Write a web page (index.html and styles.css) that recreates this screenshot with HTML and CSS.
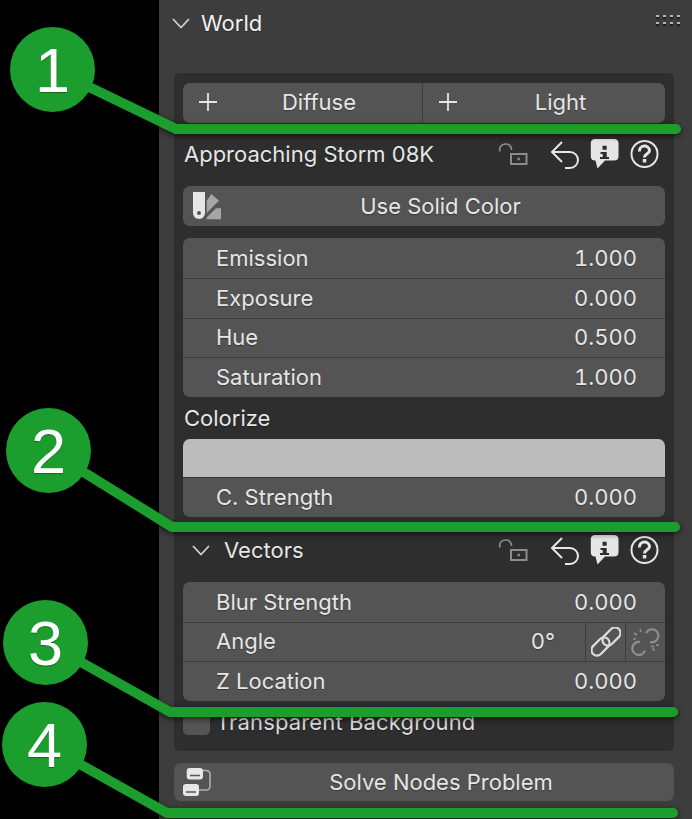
FILE: index.html
```html
<!DOCTYPE html>
<html>

<head>
    <meta charset="utf-8">
    <title>World</title>
    <link rel="stylesheet" href="styles.css">
</head>

<body>
    <svg class="defs" width="0" height="0">
        <symbol id="icon-lock" viewBox="0 0 30 24">
            <path d="M2 9.500A5.600 5.600 0 0 1 7.500 2A5.600 5.600 0 0 1 13.500 8" fill="none" stroke="#8c8c8c" stroke-width="1.700" />
            <rect x="13" y="12" width="15.500" height="10" fill="none" stroke="#8c8c8c" stroke-width="2" />
            <rect x="19.500" y="15.700" width="2.400" height="2.600" fill="#8c8c8c" />
        </symbol>
        <symbol id="icon-undo" viewBox="0 0 32 29">
            <path d="M12 2L2 12L12 22M2 12H20A8 8 0 0 1 20 28H15" fill="none" stroke="#e6e6e6" stroke-width="2" />
        </symbol>
        <symbol id="icon-info" viewBox="0 0 30 32">
            <path d="M5 1H24Q28.500 1 28.500 5.500V18Q28.500 22.500 24 22.500H15L7.500 30.500L5.500 22.500H5Q.8 22.500 .8 18V5.500Q.8 1 5 1Z" fill="#e6e6e6" />
            <path d="M12.500 7.800H16.700V11.800H12.500ZM10.500 14H16.700V19H19V21H10V19H12.700V16H10.500Z" fill="#2e2e2e" />
        </symbol>
        <symbol id="icon-help" viewBox="0 0 30 30">
            <circle cx="14.500" cy="15" r="13" fill="none" stroke="#e6e6e6" stroke-width="2" />
            <path d="M9.500 12.500A5 5 0 0 1 19.500 11.500C19.500 15 14.500 14.500 14.500 18.500" fill="none" stroke="#e6e6e6" stroke-width="3" />
            <rect x="12.800" y="20" width="3.500" height="3.500" fill="#e6e6e6" />
        </symbol>
    </svg>

    <main class="panel">
        <header class="panel-head">
            <svg class="chevron" width="18" height="11" viewBox="0 0 18 11">
                <path d="M1 1L9 9.500L17 1" fill="none" stroke="#d0d0d0" stroke-width="1.800" />
            </svg>
            <span class="panel-title">World</span>
            <svg class="grip" width="26" height="12" viewBox="0 0 26 12">
                <g fill="#1f1f1f">
                    <rect x="1" y="2" width="3" height="2" /><rect x="8" y="2" width="3" height="2" /><rect x="15" y="2" width="3" height="2" /><rect x="22" y="2" width="3" height="2" />
                    <rect x="1" y="9" width="3" height="2" /><rect x="8" y="9" width="3" height="2" /><rect x="15" y="9" width="3" height="2" /><rect x="22" y="9" width="3" height="2" />
                </g>
                <g fill="#b4b4b4">
                    <rect x="1" y="0" width="3" height="2" /><rect x="8" y="0" width="3" height="2" /><rect x="15" y="0" width="3" height="2" /><rect x="22" y="0" width="3" height="2" />
                    <rect x="1" y="7" width="3" height="2" /><rect x="8" y="7" width="3" height="2" /><rect x="15" y="7" width="3" height="2" /><rect x="22" y="7" width="3" height="2" />
                </g>
            </svg>
        </header>

        <section class="box">
            <div class="split">
                <button class="btn btn-plus">
                    <svg class="plus" width="18" height="18" viewBox="0 0 18 18"><path d="M9 0V18M0 9H18" stroke="#e6e6e6" stroke-width="1.800" /></svg>
                    Diffuse
                </button>
                <button class="btn btn-plus">
                    <svg class="plus" width="18" height="18" viewBox="0 0 18 18"><path d="M9 0V18M0 9H18" stroke="#e6e6e6" stroke-width="1.800" /></svg>
                    Light
                </button>
            </div>

            <div class="title-row">
                <span>Approaching Storm 08K</span>
                <div class="tools">
                    <svg class="tool-lock" width="30" height="24"><use href="#icon-lock" /></svg>
                    <svg class="tool-undo" width="32" height="29"><use href="#icon-undo" /></svg>
                    <svg class="tool-info" width="30" height="32"><use href="#icon-info" /></svg>
                    <svg class="tool-help" width="30" height="30"><use href="#icon-help" /></svg>
                </div>
            </div>

            <button class="btn btn-solid">
                <svg class="btn-icon" width="30" height="28" viewBox="0 0 30 28">
                    <path d="M1 0H13V21A6 6 0 0 1 1 21Z" fill="#e6e6e6" />
                    <circle cx="7" cy="21" r="2" fill="#545454" />
                    <path d="M14.700 8.700L19.300 2L27 8.700L20.300 15.300L14.700 21.300Z" fill="#a6a6a6" />
                    <path d="M14.700 27.300H29V16.300H24L14.700 25.500Z" fill="#a6a6a6" />
                </svg>
                Use Solid Color
            </button>

            <div class="rows rows-main">
                <div class="row"><span>Emission</span><span class="value">1.000</span></div>
                <div class="row"><span>Exposure</span><span class="value">0.000</span></div>
                <div class="row"><span>Hue</span><span class="value">0.500</span></div>
                <div class="row"><span>Saturation</span><span class="value">1.000</span></div>
            </div>

            <div class="label">Colorize</div>

            <div class="rows">
                <div class="swatch"></div>
                <div class="row"><span>C. Strength</span><span class="value">0.000</span></div>
            </div>

            <div class="title-row title-sub">
                <svg class="chevron" width="18" height="11" viewBox="0 0 18 11">
                    <path d="M1 1L9 9.500L17 1" fill="none" stroke="#d0d0d0" stroke-width="1.800" />
                </svg>
                <span>Vectors</span>
                <div class="tools">
                    <svg class="tool-lock" width="30" height="24"><use href="#icon-lock" /></svg>
                    <svg class="tool-undo" width="32" height="29"><use href="#icon-undo" /></svg>
                    <svg class="tool-info" width="30" height="32"><use href="#icon-info" /></svg>
                    <svg class="tool-help" width="30" height="30"><use href="#icon-help" /></svg>
                </div>
            </div>

            <div class="rows">
                <div class="row"><span>Blur Strength</span><span class="value">0.000</span></div>
                <div class="row row-angle">
                    <span>Angle</span><span class="value angle-value">0°</span>
                    <div class="cell">
                        <svg width="30" height="30" viewBox="0 0 30 30" fill="none" stroke="#dcdcdc" stroke-width="2.200">
                            <rect x="-1" y="14" width="21" height="11" rx="5.500" transform="rotate(-45 9.500 19.500)" />
                            <rect x="10" y="4" width="21" height="11" rx="5.500" transform="rotate(-45 20.500 9.500)" />
                        </svg>
                    </div>
                    <div class="cell">
                        <svg width="30" height="30" viewBox="0 0 30 30" fill="none" stroke="#8e8e8e" stroke-width="2.200">
                            <path d="M15 6A6.500 6.500 0 1 1 19 15" />
                            <path d="M9 15A6.500 6.500 0 1 0 14 23.500" />
                            <path d="M3 6L6 8M9 2L10 5M2 12H5M20 19L23 20M25 18H28M23 24L22 21" stroke-width="1.600" />
                        </svg>
                    </div>
                </div>
                <div class="row"><span>Z Location</span><span class="value">0.000</span></div>
            </div>

            <label class="check-row">
                <span class="check"></span>
                Transparent Background
            </label>
        </section>

        <button class="btn btn-solve">
            <svg class="btn-icon" width="30" height="32" viewBox="0 0 30 32">
                <path d="M21 4.500H24Q28 4.500 28 8.500V20Q28 24 24 24H17" fill="none" stroke="#b0b0b0" stroke-width="1.600" />
                <rect x="4.700" y="2" width="16.300" height="11.500" rx="3" fill="#e6e6e6" />
                <rect x="1" y="18" width="16" height="12" rx="3" fill="#e6e6e6" />
                <path d="M8 9.500H18M4 26H14" stroke="#545454" stroke-width="1.500" />
            </svg>
            Solve Nodes Problem
        </button>
    </main>

    <svg class="notes" width="692" height="819" viewBox="0 0 692 819">
        <g class="note-lines">
            <path d="M52 69L176 129H676" />
            <path d="M48 450L172 527H675" />
            <path d="M45 642L170 712H673" />
            <path d="M44 744L167 813H673" />
        </g>
        <g class="note-dots">
            <circle cx="52.500" cy="69.500" r="42.500" />
            <circle cx="48.500" cy="450.500" r="42.500" />
            <circle cx="45.500" cy="642.500" r="42.500" />
            <circle cx="44.500" cy="744.500" r="42.500" />
        </g>
        <g class="note-nums">
            <text x="52.500" y="92">1</text>
            <text x="48.500" y="473">2</text>
            <text x="45.500" y="665">3</text>
            <text x="44.500" y="767">4</text>
        </g>
    </svg>
</body>

</html>
```

FILE: styles.css
```css
html {
    background-color: #000;
}

body {
    position: relative;
    width: 692px;
    height: 819px;
    margin: 0;
    overflow: hidden;
    font-family: "Inter", "Liberation Sans", sans-serif;
    font-size: 22px;
    color: #e6e6e6;
    text-shadow: 0 1px 1px rgba(0, 0, 0, 0.35);
}

.defs {
    position: absolute;
}

.panel {
    box-sizing: border-box;
    height: 819px;
    margin-left: 159px;
    padding: 0 18px 0 15px;
    background-color: #3d3d3d;
}

.panel-head {
    display: flex;
    align-items: center;
    height: 46px;
}

.panel-head .chevron {
    margin-left: -2px;
    margin-right: 11px;
}

.panel-title {
    color: #f0f0f0;
}

.grip {
    margin-left: auto;
    margin-right: -7px;
    margin-top: -4px;
}

.box {
    margin-top: 27px;
    padding: 10px 9px 16px;
    border-radius: 6px;
    background-color: #2e2e2e;
}

.btn {
    display: flex;
    align-items: center;
    justify-content: center;
    box-sizing: border-box;
    width: 100%;
    padding: 0;
    border: 0;
    border-radius: 7px;
    background-color: #545454;
    font: inherit;
    color: #e6e6e6;
    text-shadow: inherit;
}

.split {
    display: flex;
    height: 39.5px;
}

.btn-plus {
    position: relative;
    flex: 239px 0 0;
    padding: 0 0 1px 33px;
    border-radius: 7px 0 0 7px;
}

.btn-plus + .btn-plus {
    flex: 1;
    border-left: 1px solid #3d3d3d;
    border-radius: 0 7px 7px 0;
}

.plus {
    position: absolute;
    left: 16px;
    top: 9.5px;
}

.title-row {
    display: flex;
    align-items: center;
    height: 63.5px;
    padding-left: 1px;
}

.tools {
    display: flex;
    align-items: center;
    margin-left: auto;
    padding-right: 5px;
}

.tool-undo {
    margin-left: 22px;
}

.tool-info {
    margin-left: 8px;
}

.tool-help {
    margin-left: 10px;
}

.btn-solid {
    position: relative;
    height: 40px;
    padding-left: 33px;
}

.btn-icon {
    position: absolute;
    left: 9px;
    top: 6px;
}

.rows {
    overflow: hidden;
    border-radius: 7px;
    background-color: #545454;
}

.rows-main {
    margin-top: 12px;
}

.row {
    display: flex;
    align-items: center;
    justify-content: space-between;
    box-sizing: border-box;
    height: 39.75px;
    padding: 0 28px 1px 33px;
    border-top: 1px solid #3d3d3d;
}

.row:first-child {
    padding-bottom: 0;
    border-top: 0;
}

.value {
    font-variant-numeric: tabular-nums;
}

.label {
    display: flex;
    align-items: center;
    height: 42px;
    padding: 0 0 1px 1px;
    box-sizing: border-box;
}

.swatch {
    height: 38px;
    background-color: #bcbcbc;
}

.swatch + .row {
    padding-bottom: 0;
    border-top: 1px solid #333;
}

.title-sub {
    box-sizing: border-box;
    height: 65px;
    padding-top: 2px;
}

.title-sub .chevron {
    margin-left: 8px;
    margin-right: 14px;
}

.row-angle {
    padding-right: 0;
    justify-content: flex-start;
}

.angle-value {
    margin-left: auto;
    margin-right: 30px;
}

.cell {
    display: flex;
    align-items: center;
    justify-content: center;
    box-sizing: border-box;
    flex: 40px 0 0;
    align-self: stretch;
    margin-bottom: -1px;
    border-left: 1px solid #3d3d3d;
}

.check-row {
    display: flex;
    align-items: center;
    gap: 6px;
    height: 26px;
    margin-top: 8px;
    color: #dcdcdc;
    letter-spacing: 0.14px;
}

.check {
    box-sizing: border-box;
    width: 27px;
    height: 26px;
    border-radius: 5px;
    background-color: #545454;
}

.btn-solve {
    position: relative;
    height: 38px;
    margin-top: 12px;
    padding-left: 34px;
}

.btn-solve .btn-icon {
    left: 8px;
    top: 3px;
}

.notes {
    position: absolute;
    left: 0;
    top: 0;
}

.note-lines {
    fill: none;
    stroke: #1c9e2e;
    stroke-width: 10;
    stroke-linecap: round;
    stroke-linejoin: round;
    filter: drop-shadow(0 2px 3px rgba(0, 0, 0, 0.6));
}

.note-dots {
    fill: #1c9e2e;
}

.note-nums {
    fill: #fff;
    font-family: "Liberation Sans", sans-serif;
    font-size: 63px;
    text-anchor: middle;
}
```
